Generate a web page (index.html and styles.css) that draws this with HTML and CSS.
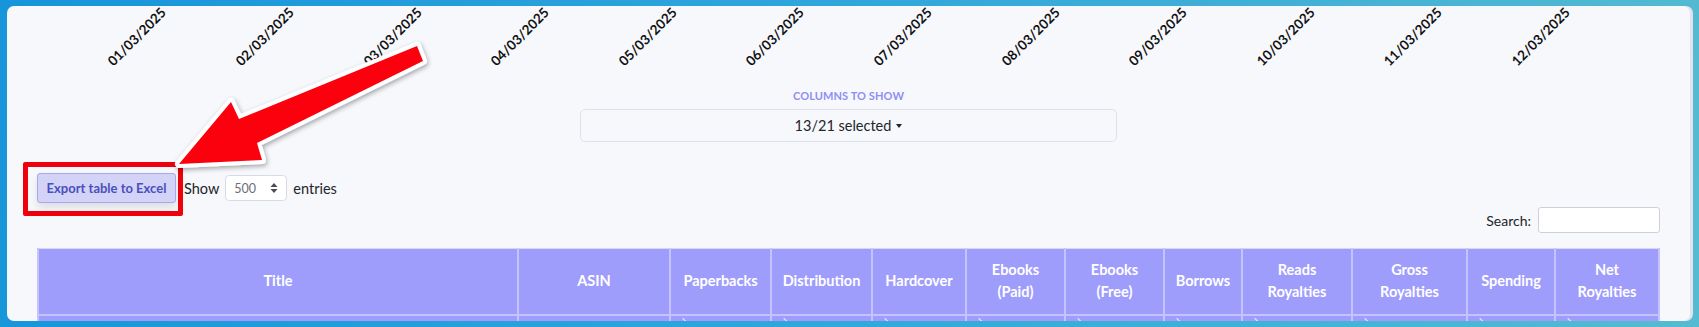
FILE: index.html
```html
<!DOCTYPE html>
<html lang="en">
<head>
<meta charset="utf-8">
<title>Sales table</title>
<link rel="stylesheet" href="styles.css">
</head>
<body>
<div class="page">
  <div class="card">
    <div class="axis">
      <div class="tick"><span>01/03/2025</span></div>
      <div class="tick"><span>02/03/2025</span></div>
      <div class="tick"><span>03/03/2025</span></div>
      <div class="tick"><span>04/03/2025</span></div>
      <div class="tick"><span>05/03/2025</span></div>
      <div class="tick"><span>06/03/2025</span></div>
      <div class="tick"><span>07/03/2025</span></div>
      <div class="tick"><span>08/03/2025</span></div>
      <div class="tick"><span>09/03/2025</span></div>
      <div class="tick"><span>10/03/2025</span></div>
      <div class="tick"><span>11/03/2025</span></div>
      <div class="tick"><span>12/03/2025</span></div>
    </div>

    <div class="picker">
      <div class="picker-label">COLUMNS TO SHOW</div>
      <div class="picker-btn">13/21 selected <span class="caret"></span></div>
    </div>

    <div class="controls">
      <div class="export-wrap">
        <div class="export">Export table to Excel</div>
        <div class="highlight"></div>
      </div>
      <div class="length">
        <span>Show</span>
        <span class="select">500
          <svg class="updown" width="8" height="12" viewBox="0 0 8 12"><path d="M4 1 L7.5 5 H0.5 Z M4 11 L7.5 7 H0.5 Z" fill="#4a4d52"/></svg>
        </span>
        <span>entries</span>
      </div>
    </div>

    <div class="search-row">
      <span>Search:</span>
      <div class="search"></div>
    </div>

    <table class="grid">
      <colgroup>
        <col class="c-title"><col class="c-asin"><col class="c-pap"><col class="c-dist"><col class="c-hard"><col class="c-epaid"><col class="c-efree"><col class="c-bor"><col class="c-reads"><col class="c-gross"><col class="c-spend"><col class="c-net">
      </colgroup>
      <thead>
        <tr>
          <th>Title</th>
          <th>ASIN</th>
          <th>Paperbacks</th>
          <th>Distribution</th>
          <th>Hardcover</th>
          <th>Ebooks<br>(Paid)</th>
          <th>Ebooks<br>(Free)</th>
          <th>Borrows</th>
          <th>Reads<br>Royalties</th>
          <th>Gross<br>Royalties</th>
          <th>Spending</th>
          <th>Net<br>Royalties</th>
        </tr>
        <tr class="sortrow">
          <td></td><td></td>
          <td>→</td><td>→</td><td>→</td><td>→</td><td>→</td><td>→</td><td>→</td><td>→</td><td>→</td><td>→</td>
        </tr>
      </thead>
    </table>
  </div>

  <svg class="arrow" width="1699" height="327" viewBox="0 0 1699 327">
    <defs>
      <filter id="sh" x="-20%" y="-20%" width="140%" height="140%">
        <feDropShadow dx="1" dy="2" stdDeviation="2.5" flood-color="#000" flood-opacity="0.35"/>
      </filter>
    </defs>
    <polygon filter="url(#sh)" points="417,46 239,119 231,102 179,164 262,160 257,143 423,61" fill="#fb0010" stroke="#ffffff" stroke-width="8" stroke-linejoin="round" paint-order="stroke"/>
  </svg>
</div>
</body>
</html>
```

FILE: styles.css
```css
* { box-sizing: border-box; }

html, body {
  margin: 0;
  padding: 0;
}

body {
  font-family: Lato, "Open Sans", "Liberation Sans", sans-serif;
  color: #212529;
  font-size: 14px;
  background: linear-gradient(100deg, #1795da 0%, #2ea5dc 45%, #55bbd1 100%);
}

.page {
  position: relative;
  height: 327px;
  overflow: hidden;
  padding: 6px 9px 0 7px;
}

.card {
  height: 315px;
  background: #f7f8fc;
  border-radius: 7px;
  box-shadow: 3px 0 0 #e2e2ef;
  overflow: hidden;
  padding: 0 30px;
}

/* chart x-axis labels */
.axis {
  display: flex;
  height: 56px;
  margin-left: -1px;
}

.tick {
  flex: 0 0 127.6px;
  display: flex;
  justify-content: flex-end;
  align-items: flex-start;
}

.tick span {
  display: block;
  font-size: 13.5px;
  font-weight: 700;
  color: #111;
  line-height: 14px;
  white-space: nowrap;
  margin-top: -3px;
  transform-origin: 100% 50%;
  transform: rotate(-45deg);
}

/* column picker */
.picker {
  display: flex;
  flex-direction: column;
  align-items: center;
  margin-top: 27px;
}

.picker-label {
  font-size: 11px;
  font-weight: 700;
  color: #8d8ef6;
  line-height: 14px;
  letter-spacing: 0.1px;
}

.picker-btn {
  margin-top: 6px;
  width: 537px;
  height: 33px;
  border: 1px solid #dfe0ea;
  border-radius: 5px;
  display: flex;
  align-items: center;
  justify-content: center;
  font-size: 14.5px;
  color: #212529;
}

.caret {
  display: inline-block;
  margin-left: 5px;
  border-top: 4px solid #212529;
  border-left: 3.5px solid transparent;
  border-right: 3.5px solid transparent;
}

/* controls row */
.controls {
  display: flex;
  align-items: center;
  margin-top: 31px;
  gap: 8px;
}

.export-wrap {
  position: relative;
}

.export {
  height: 30px;
  width: 139px;
  display: flex;
  align-items: center;
  justify-content: center;
  background: #d2d3f6;
  border: 1px solid #a7a8ee;
  border-radius: 3px;
  color: #4a4fbd;
  font-weight: 700;
  font-size: 13px;
  box-shadow: 0 5px 8px rgba(0, 0, 0, 0.10);
}

.highlight {
  position: absolute;
  left: -14px;
  top: -11px;
  width: 160px;
  height: 54px;
  border: 5px solid #ee000c;
  border-radius: 2px;
}

.length {
  display: flex;
  align-items: center;
  gap: 6px;
  font-size: 14.5px;
}

.select {
  display: flex;
  align-items: center;
  justify-content: space-between;
  width: 62px;
  height: 26px;
  padding: 0 8px 0 8px;
  background: #fff;
  border: 1px solid #d9dae6;
  border-radius: 4px;
  color: #6b6f76;
  font-size: 12.5px;
}

.updown { display: block; }

/* search */
.search-row {
  display: flex;
  justify-content: flex-end;
  align-items: center;
  gap: 7px;
  margin-top: 4px;
  font-size: 14px;
}

.search {
  width: 122px;
  height: 26px;
  background: #fff;
  border: 1px solid #cfd0da;
  border-radius: 3px;
}

/* table */
.grid {
  margin-top: 15px;
  width: 1621px;
  table-layout: fixed;
  border-collapse: collapse;
  border-top: 1px solid #d8d8f6;
}

.c-title { width: 480px; }
.c-asin { width: 152px; }
.c-pap { width: 101px; }
.c-dist { width: 101px; }
.c-hard { width: 94px; }
.c-epaid { width: 99px; }
.c-efree { width: 99px; }
.c-bor { width: 78px; }
.c-reads { width: 110px; }
.c-gross { width: 115px; }
.c-spend { width: 88px; }
.c-net { width: 104px; }

.grid th {
  background: #9f9dfc;
  color: #fff;
  font-weight: 700;
  font-size: 14.5px;
  line-height: 22px;
  height: 66px;
  padding: 0 4px;
  text-align: center;
  vertical-align: middle;
  border: 2px solid #c4c3fd;
  border-top: 0;
  white-space: nowrap;
}

.sortrow td {
  background: #9f9dfc;
  color: #fff;
  font-size: 12px;
  line-height: 9px;
  height: 30px;
  padding: 0 4px;
  vertical-align: top;
  border-left: 2px solid #c4c3fd;
  border-right: 2px solid #c4c3fd;
}

/* annotation arrow */
.arrow {
  position: absolute;
  left: 0;
  top: 0;
  pointer-events: none;
}
```
